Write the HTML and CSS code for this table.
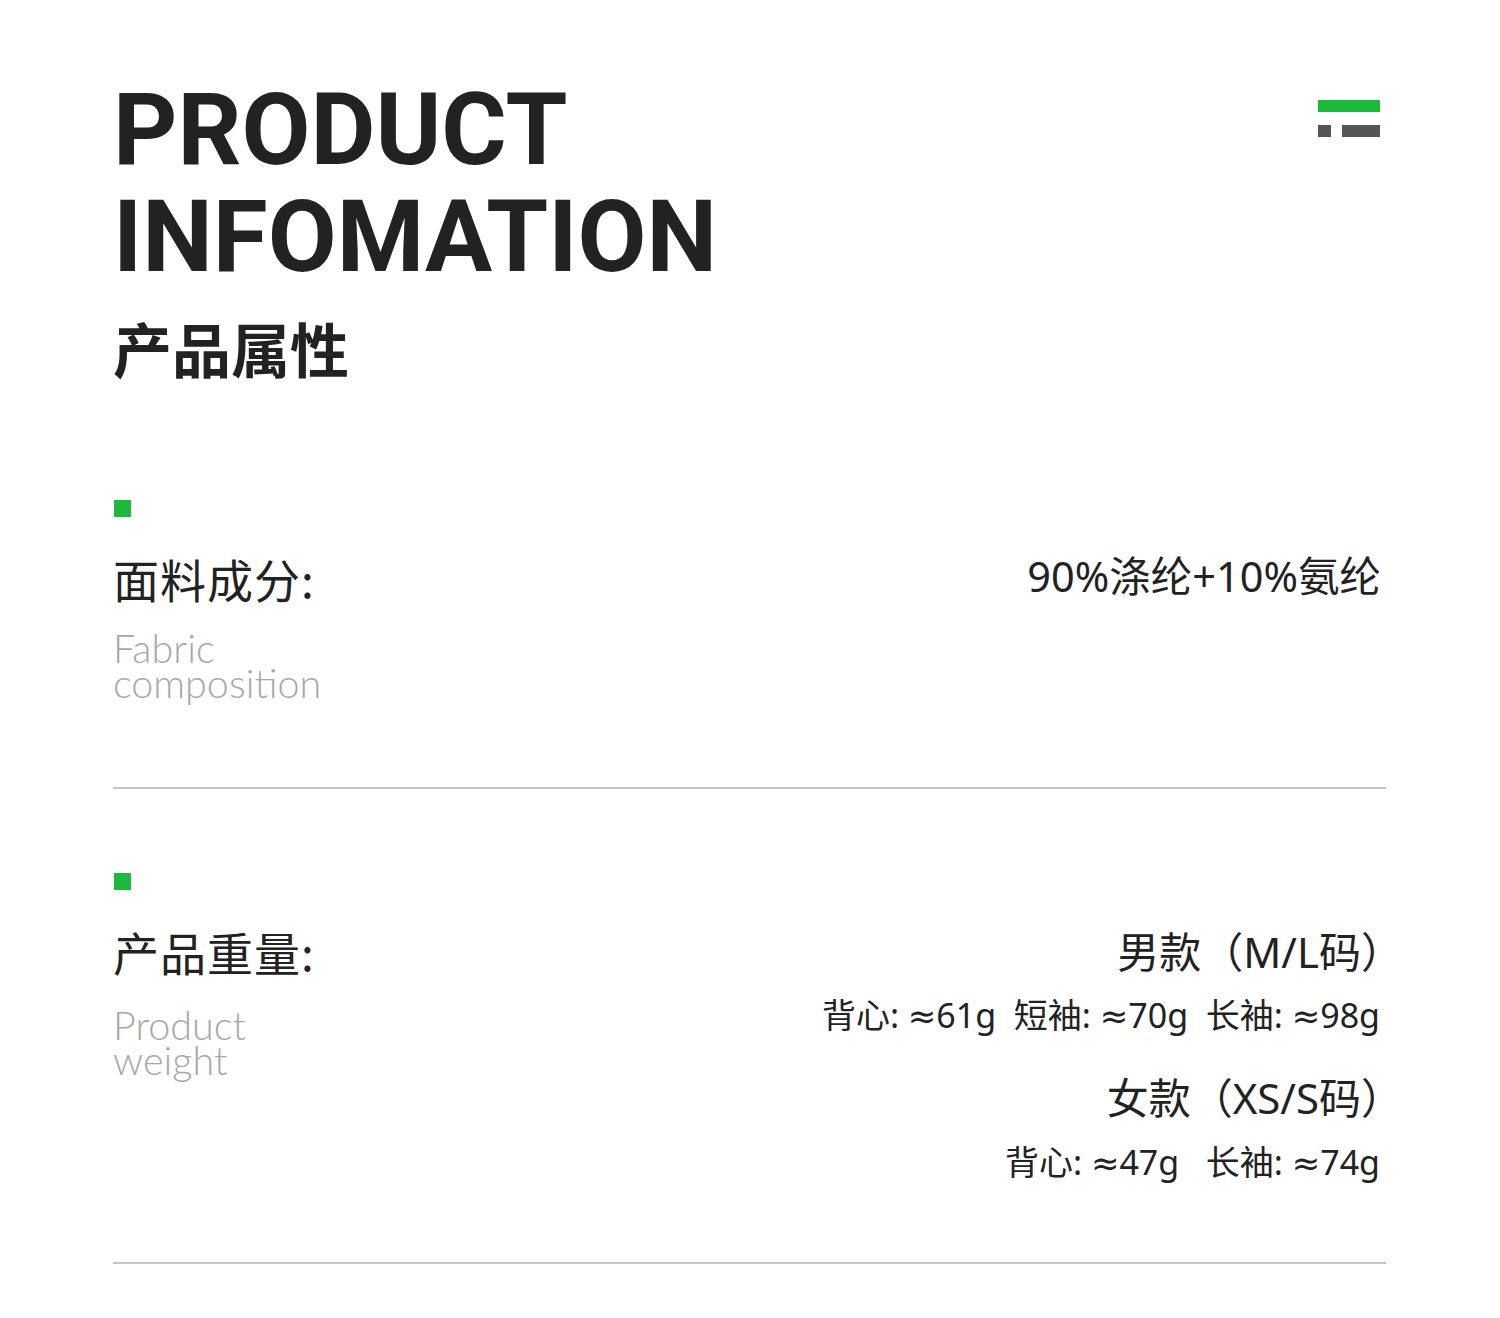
FILE: index.html
```html
<!DOCTYPE html>
<html lang="zh">
<head>
<meta charset="utf-8">
<link rel="stylesheet" href="styles.css">
</head>
<body>
<div class="page">
  <header class="head">
    <div class="titles">
      <h1 class="title">PRODUCT<br>INFOMATION</h1>
      <h2 class="subtitle">产品属性</h2>
    </div>
    <div class="logo">
      <span class="bar-green"></span>
      <div class="bar-row"><span class="bar-s"></span><span class="bar-l"></span></div>
    </div>
  </header>

  <section class="sec sec1">
    <span class="dot"></span>
    <div class="row">
      <div class="label">
        <div class="cn">面料成分:</div>
        <div class="en"><div>Fabric</div><div>composition</div></div>
      </div>
      <div class="value v1">90%涤纶+10%氨纶</div>
    </div>
  </section>
  <hr class="rule rule1">

  <section class="sec sec2">
    <span class="dot"></span>
    <div class="row">
      <div class="label">
        <div class="cn">产品重量:</div>
        <div class="en en2"><div>Product</div><div>weight</div></div>
      </div>
      <div class="weights">
        <div class="wh">男款（M/L码）</div>
        <div class="wd">背心: ≈61g&nbsp;&nbsp;短袖: ≈70g&nbsp;&nbsp;长袖: ≈98g</div>
        <div class="wh wh2">女款（XS/S码）</div>
        <div class="wd wd2">背心: ≈47g&nbsp;&nbsp;&nbsp;长袖: ≈74g</div>
      </div>
    </div>
  </section>
  <hr class="rule rule2">
</div>
</body>
</html>
```

FILE: styles.css
```css
* { box-sizing: border-box; }
html, body { margin: 0; padding: 0; background: #fff; }
body {
  font-family: "Noto Sans CJK SC", "Noto Sans", sans-serif;
  color: #222;
}
.page {
  width: 1500px;
  padding: 76px 114px 0 113px;
}
.head {
  display: flex;
  justify-content: space-between;
  align-items: flex-start;
}
.title {
  margin: 0;
  font-family: "Roboto", "Liberation Sans", sans-serif;
  font-weight: 700;
  font-size: 100px;
  line-height: 107px;
  color: #222;
}
.subtitle {
  margin: 18px 0 0 0;
  font-family: "Noto Sans CJK SC", sans-serif;
  font-weight: 700;
  font-size: 59px;
  line-height: 80px;
  color: #222;
}
.logo {
  margin-top: 24px;
  margin-right: 6px;
  width: 62px;
  display: flex;
  flex-direction: column;
  gap: 13px;
}
.bar-green { display: block; height: 12px; background: #1cb93a; }
.bar-row { display: flex; justify-content: space-between; }
.bar-s { display: block; width: 13px; height: 12px; background: #555; }
.bar-l { display: block; width: 38px; height: 12px; background: #555; }

.sec1 { margin-top: 112px; }
.dot {
  display: block;
  width: 17px;
  height: 17px;
  background: #1cb93a;
  margin-left: 1px;
}
.row {
  display: flex;
  justify-content: space-between;
  align-items: flex-start;
  margin-top: 33px;
}
.cn {
  font-size: 46px;
  line-height: 56px;
  font-weight: 400;
  letter-spacing: 1px;
  color: #222;
}
.en {
  margin-top: 24px;
  font-family: "Lato", "Noto Sans", sans-serif;
  font-weight: 300;
  font-size: 39.5px;
  line-height: 35px;
  color: #a8a8a8;
}
.en2 { margin-top: 28px; }
.value {
  font-family: "Noto Sans", "Noto Sans CJK SC", sans-serif;
  font-size: 41.5px;
  line-height: 50px;
  font-weight: 400;
  color: #222;
  margin-right: 5px;
  margin-top: 1px;
}
.rule {
  border: 0;
  height: 2px;
  background: #c4c4c4;
  margin: 0;
}
.rule1 { margin-top: 87px; }
.sec2 { margin-top: 84px; }
.weights {
  text-align: right;
  margin-top: 1px;
}
.wh {
  font-family: "Noto Sans", "Noto Sans CJK SC", sans-serif;
  font-size: 42px;
  line-height: 56px;
  font-weight: 400;
  margin-right: -17px;
}
.wh2 { margin-top: 30px; }
.wd {
  font-family: "Noto Sans", "DejaVu Sans", "Noto Sans CJK SC", sans-serif;
  font-size: 34px;
  line-height: 50px;
  font-weight: 400;
  margin-right: 6px;
  margin-top: 10px;
}
.wd2 { margin-top: 11px; }
.rule2 { margin-top: 75px; }
```
